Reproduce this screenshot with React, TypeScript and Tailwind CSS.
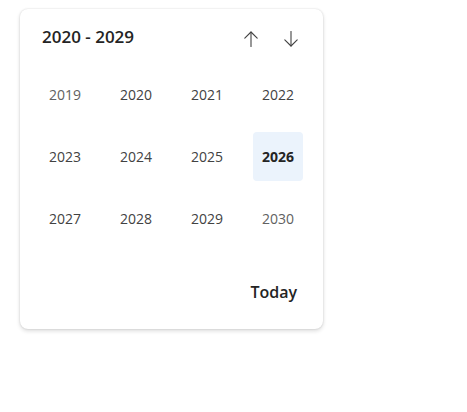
import React from "react";

const years = [
  [2019, 2020, 2021, 2022],
  [2023, 2024, 2025, 2026],
  [2027, 2028, 2029, 2030],
];

function ArrowUp() {
  return (
    <svg width="16" height="18" viewBox="0 0 16 18" fill="none" stroke="#424242" strokeWidth="1.1" strokeLinecap="round" strokeLinejoin="round">
      <path d="M8 16.5V2" />
      <path d="M1.8 8.2L8 2L14.2 8.2" />
    </svg>
  );
}

function ArrowDown() {
  return (
    <svg width="16" height="18" viewBox="0 0 16 18" fill="none" stroke="#424242" strokeWidth="1.1" strokeLinecap="round" strokeLinejoin="round">
      <path d="M8 1.5V16" />
      <path d="M1.8 9.8L8 16L14.2 9.8" />
    </svg>
  );
}

export default function App() {
  return (
    <div className="w-[467px] h-[412px] bg-white" style={{ fontFamily: '"Open Sans", "Noto Sans", sans-serif' }}>
      <div className="pt-[9px] pl-[20px]">
        <div className="w-[303px] h-[320px] rounded-lg bg-white shadow-[0_0_2px_rgba(0,0,0,0.14),0_2px_4px_rgba(0,0,0,0.14)] flex flex-col">
          <div className="flex items-center justify-between pl-[22px] pr-[16px] pt-[8px] h-[54px]">
            <span className="text-[17px] font-semibold text-[#242424] leading-[22px] -mt-[6px]">2020 - 2029</span>
            <div className="flex items-center gap-[8px] -mt-[2px]">
              <button className="w-[32px] h-[28px] flex items-center justify-center"><ArrowUp /></button>
              <button className="w-[32px] h-[28px] flex items-center justify-center"><ArrowDown /></button>
            </div>
          </div>
          <div className="grid grid-cols-4 gap-x-[21px] gap-y-[13px] px-[20px] mt-[7px]">
            {years.flat().map((y) => {
              const selected = y === 2026;
              const outside = y === 2019 || y === 2030;
              return (
                <div
                  key={y}
                  className={
                    "h-[49px] flex items-center justify-center rounded text-[14px] " +
                    (selected
                      ? "bg-[#ebf3fc] font-bold text-[#242424]"
                      : outside
                      ? "text-[#616161]"
                      : "text-[#424242]")
                  }
                >
                  {y}
                </div>
              );
            })}
          </div>
          <div className="flex-1" />
          <div className="flex justify-end pr-[26px] pb-[26px]">
            <span className="text-[16px] font-semibold text-[#242424] leading-[22px]">Today</span>
          </div>
        </div>
      </div>
    </div>
  );
}
